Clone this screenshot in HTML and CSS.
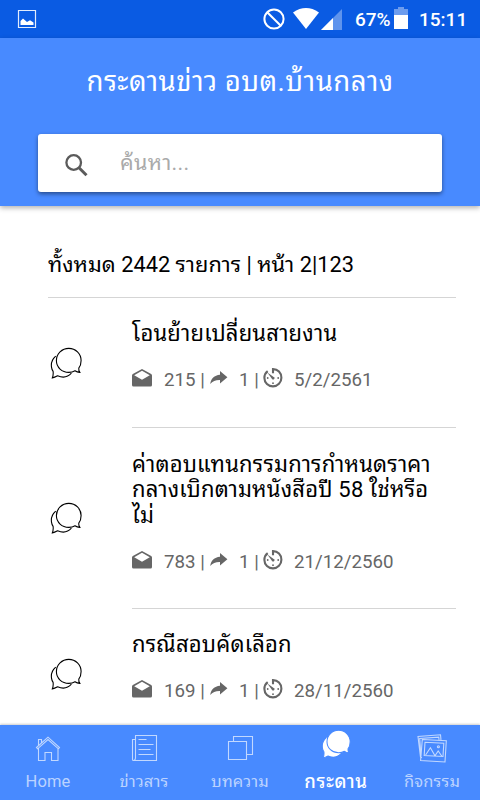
FILE: index.html
```html
<!DOCTYPE html>
<html lang="th">

<head>
  <meta charset="UTF-8">
  <meta name="viewport" content="width=device-width, initial-scale=1.0">
  <title>กระดานข่าว อบต.บ้านกลาง</title>
  <link rel="stylesheet" href="styles.css">
</head>

<body>
  <!-- icons -->
  <svg class="sprite" width="0" height="0">
    <symbol id="chat" viewBox="0 0 32 32">
      <path d="M5.7 9.1C2.4 12 .9 16 1.5 20.1C1.7 21.7 2.3 23.2 3.1 24.4C3.4 26.6 3 29.1 2.3 30.9C4.3 30.6 6 29.7 7.6 28.8C12.7 31 18 30 21.4 26.2" />
      <path d="M28.8 21.2C30.4 19.1 31.1 16.4 31.1 13.6C31.1 6.7 25.6 1.4 18.8 1.4S6.4 6.7 6.4 13.6S12 25.4 18.8 25.4C21.2 25.4 23.2 24.9 25 23.8C26.4 24.8 28 25.3 29.8 25.4C29 24.1 28.6 22.7 28.8 21.2Z" />
    </symbol>
    <symbol id="mail" viewBox="0 0 20 18">
      <path fill-rule="evenodd" d="M10 0L19.2 5Q20 5.5 20 6.5V16Q20 17.5 18.5 17.5H1.5Q0 17.5 0 16V6.5Q0 5.5.8 5ZM10 1.8L2.2 6.2L10 10.8L17.8 6.2Z" />
    </symbol>
    <symbol id="share" viewBox="0 0 18 14">
      <path d="M10 0L17.4 6.3L10 12.5V8.9C5.7 8.8 2.7 9.9.2 13C1 7.7 4.2 4.4 10 3.8Z" />
    </symbol>
    <symbol id="timer" viewBox="0 0 20 20">
      <path d="M10 5.2V1.1C14.8 1.1 18.4 4.9 18.4 9.7S14.7 18.4 10 18.4S1.4 14.7 1.4 9.9C1.4 7.2 2.6 4.8 4.7 3.2" fill="none" stroke="#666" stroke-width="2.1" />
      <path d="M4.4 4.6L11 9.2Q12 10.1 11.2 11T9.2 11.2Z" />
      <circle cx="4.7" cy="10" r=".9" />
      <circle cx="15.2" cy="10" r=".9" />
      <circle cx="10" cy="15.2" r=".9" />
    </symbol>
  </svg>

  <div class="status">
    <svg class="status__image" width="20" height="20" viewBox="0 0 20 20">
      <path d="M1.5 1.5H18.5V18.5H1.5Z" fill="none" stroke="#e2ecfd" stroke-width="1.2" />
      <path d="M3.5 16V12L6 9.5L10 13L13 11.3L16.5 13.5V16Z" />
    </svg>
    <svg width="22" height="22" viewBox="0 0 22 22" fill="none" stroke="#fff" stroke-width="2">
      <circle cx="11" cy="11" r="9.6" />
      <path d="M4.2 4.2L17.8 17.8" />
    </svg>
    <svg class="status__wifi" width="26" height="21" viewBox="0 0 26 21">
      <path d="M0 4.5Q13-4.3 26 4.5L13 21Z" />
    </svg>
    <svg class="status__signal" width="21" height="21" viewBox="0 0 21 21">
      <path d="M21 0V21H0Z" opacity=".35" />
      <path d="M12 9V21H0Z" />
    </svg>
    <span class="status__percent">67%</span>
    <svg class="status__battery" width="14" height="22" viewBox="0 0 14 22">
      <path d="M0 2H4V0H10V2H14V8H0Z" opacity=".4" />
      <path d="M0 8H14V22H0Z" />
    </svg>
    <span class="status__time">15:11</span>
  </div>

  <header class="header">
    <h1 class="header__title">กระดานข่าว อบต.บ้านกลาง</h1>
    <div class="search">
      <svg width="24" height="24" viewBox="0 0 24 24" fill="none" stroke="#5b5b5b">
        <circle cx="8.7" cy="9.5" r="7.3" stroke-width="2.3" />
        <path d="M14 14.7L21.5 22.2" stroke-width="3" />
      </svg>
      <span class="search__text">ค้นหา...</span>
    </div>
  </header>

  <main class="content">
    <div class="summary">ทั้งหมด 2442 รายการ | หน้า 2|123</div>
    <ul class="list">
      <li class="item">
        <svg class="item__icon"><use href="#chat" /></svg>
        <div class="item__body">
          <h2 class="item__title">โอนย้ายเปลี่ยนสายงาน</h2>
          <p class="meta">
            <svg class="meta__mail"><use href="#mail" /></svg><span class="meta__views">215 |</span>
            <svg class="meta__share"><use href="#share" /></svg><span class="meta__reply">1 |</span>
            <svg class="meta__timer"><use href="#timer" /></svg><span>5/2/2561</span>
          </p>
        </div>
      </li>
      <li class="item">
        <svg class="item__icon"><use href="#chat" /></svg>
        <div class="item__body item__body--long">
          <h2 class="item__title">ค่าตอบแทนกรรมการกำหนดราคา<br>กลางเบิกตามหนังสือปี 58 ใช่หรือ<br>ไม่</h2>
          <p class="meta">
            <svg class="meta__mail"><use href="#mail" /></svg><span class="meta__views">783 |</span>
            <svg class="meta__share"><use href="#share" /></svg><span class="meta__reply">1 |</span>
            <svg class="meta__timer"><use href="#timer" /></svg><span>21/12/2560</span>
          </p>
        </div>
      </li>
      <li class="item">
        <svg class="item__icon"><use href="#chat" /></svg>
        <div class="item__body">
          <h2 class="item__title">กรณีสอบคัดเลือก</h2>
          <p class="meta">
            <svg class="meta__mail"><use href="#mail" /></svg><span class="meta__views">169 |</span>
            <svg class="meta__share"><use href="#share" /></svg><span class="meta__reply">1 |</span>
            <svg class="meta__timer"><use href="#timer" /></svg><span>28/11/2560</span>
          </p>
        </div>
      </li>
    </ul>
  </main>

  <nav class="tabs">
    <a class="tab">
      <svg viewBox="0 0 30 30"><path d="M3.5 13.5L15 3.2L26.5 13.5L25.4 14.8L15 5.6L4.6 14.8ZM5.5 14V26.5H12V18.5H18.5V26.5H25V14M5.5 11.3V5.5H8.5V8.7" /></svg>
      <span>Home</span>
    </a>
    <a class="tab">
      <svg viewBox="0 0 30 30"><path d="M6 1.5H27.5V26.5H4.5Q3.5 26.5 3.5 25.5V5.5H6M6.5 1.5V24Q6.5 26 4.8 26.5M9.5 5.5H17.5M9.5 10.5H24.5M9.5 15.5H21.5M9.5 20.5H24.5" /></svg>
      <span>ข่าวสาร</span>
    </a>
    <a class="tab">
      <svg viewBox="0 0 30 30"><path d="M3.5 7.5H21.5V25.5H3.5ZM8.5 7V2.5H27.5V20.5H22" /></svg>
      <span>บทความ</span>
    </a>
    <a class="tab tab--active">
      <svg viewBox="0 0 32 32"><use href="#chat" /></svg>
      <span>กระดาน</span>
    </a>
    <a class="tab">
      <svg viewBox="0 0 30 30"><path d="M5.3 5.5L29.3 6.8L28 28L3.6 26.5ZM8 8.3L26.8 9.3L26 22.5L7.2 21.5ZM5 23.5L3.5 23L1 2.5L23.5 .8L24 5.9M3.8 20L2.7 4.5L21.8 3.1L22 5.8M8.6 21L13.4 13.7L18 21.8L21.2 17L24.7 22" /><circle cx="21.4" cy="12.7" r="1" /></svg>
      <span>กิจกรรม</span>
    </a>
  </nav>
</body>

</html>
```

FILE: styles.css
```css
* {
  box-sizing: border-box;
}

body {
  display: flex;
  flex-direction: column;
  height: 800px;
  margin: 0;
  overflow: hidden;
  background: #fff;
  color: #000;
  font-family: Roboto, "Droid Sans Thai", "Noto Sans Thai Looped", "Noto Looped Thai", Waree, Loma, Garuda, Umpush, Laksaman, "Tlwg Typo", sans-serif;
}

h1,
h2,
p,
ul {
  margin: 0;
  padding: 0;
  font-weight: 400;
}

ul {
  list-style: none;
}

svg {
  flex: none;
}

.sprite {
  position: absolute;
}

/* status bar */
.status {
  display: flex;
  flex: none;
  align-items: center;
  height: 38px;
  padding: 0 12px 0 17px;
  background: #0a5be3;
  color: #fff;
  fill: #fff;
  font-size: 19px;
  font-weight: 500;
}

.status__image {
  margin-right: auto;
}

.status__wifi {
  margin-left: 8px;
  margin-top: -2px;
}

.status__signal {
  margin-left: 2px;
}

.status__percent {
  width: 37px;
  margin-left: 13px;
}

.status__battery {
  margin-left: 2px;
  margin-top: -2px;
}

.status__time {
  width: 49px;
  margin-left: 11px;
}

/* header */
.header {
  flex: none;
  height: 168px;
  padding: 25px 38px 0;
  background: #488aff;
  box-shadow: 0 2px 5px rgba(0, 0, 0, .3);
}

.header__title {
  height: 71px;
  color: #fff;
  font-size: 27.5px;
  letter-spacing: .5px;
  line-height: 38px;
  text-align: center;
  white-space: nowrap;
}

.search {
  display: flex;
  align-items: center;
  height: 58px;
  padding: 4px 27px 0;
  background: #fff;
  border-radius: 3px;
  box-shadow: 0 2px 4px rgba(0, 0, 0, .45);
}

.search__text {
  margin: -9px 0 0 31px;
  color: #aaa;
  font-size: 21.5px;
  letter-spacing: .3px;
}

/* list */
.content {
  flex: 1;
  min-height: 0;
  padding: 42px 24px 0 48px;
  overflow: hidden;
}

.summary {
  height: 50px;
  border-bottom: 1px solid #d5d5d5;
  font-size: 21.8px;
  line-height: 33px;
  white-space: nowrap;
}

.item {
  display: flex;
  align-items: center;
}

.item__icon {
  width: 32px;
  height: 32px;
  margin: 0 50px 0 2px;
  fill: none;
  stroke: #000;
  stroke-width: 1.1;
}

.item__body {
  flex: 1;
  min-width: 0;
  padding: 23px 0 35px;
  border-bottom: 1px solid #d5d5d5;
}

.item__body--long {
  padding: 24px 0 34px;
}

.item__title {
  font-size: 22px;
  letter-spacing: .2px;
  line-height: 25.7px;
  white-space: nowrap;
}

.meta {
  display: flex;
  align-items: center;
  height: 24px;
  margin-top: 21px;
  color: #666;
  fill: #666;
  font-size: 18.7px;
  white-space: nowrap;
}

.meta__mail {
  width: 20px;
  height: 18px;
  margin: -4px 12px 0 0;
}

.meta__views {
  width: 46px;
}

.meta__share {
  width: 18px;
  height: 14px;
  margin: -4px 11px 0 0;
}

.meta__reply {
  width: 24px;
}

.meta__timer {
  width: 20px;
  height: 20px;
  margin: -4px 11px 0 0;
}

/* tabs */
.tabs {
  display: grid;
  grid-template-columns: repeat(5, 1fr);
  flex: none;
  height: 75px;
  background: #488aff;
  box-shadow: 0 -1px 2px rgba(0, 0, 0, .2);
  color: #bbd3ff;
}

.tab {
  display: flex;
  flex-direction: column;
  align-items: center;
  padding-top: 9px;
  font-size: 16.5px;
  letter-spacing: .15px;
}

.tab svg {
  width: 30px;
  height: 30px;
  fill: none;
  stroke: #c2d8ff;
  stroke-width: 1.1;
}

.tab span {
  margin-top: 5px;
  line-height: 26px;
  white-space: nowrap;
}

.tab--active {
  padding-top: 4px;
  color: #fff;
  font-size: 18.5px;
  font-weight: 500;
  letter-spacing: .7px;
}

.tab--active svg {
  fill: #fff;
  stroke: #488aff;
}

.tab--active span {
  margin-top: 10px;
}
```
